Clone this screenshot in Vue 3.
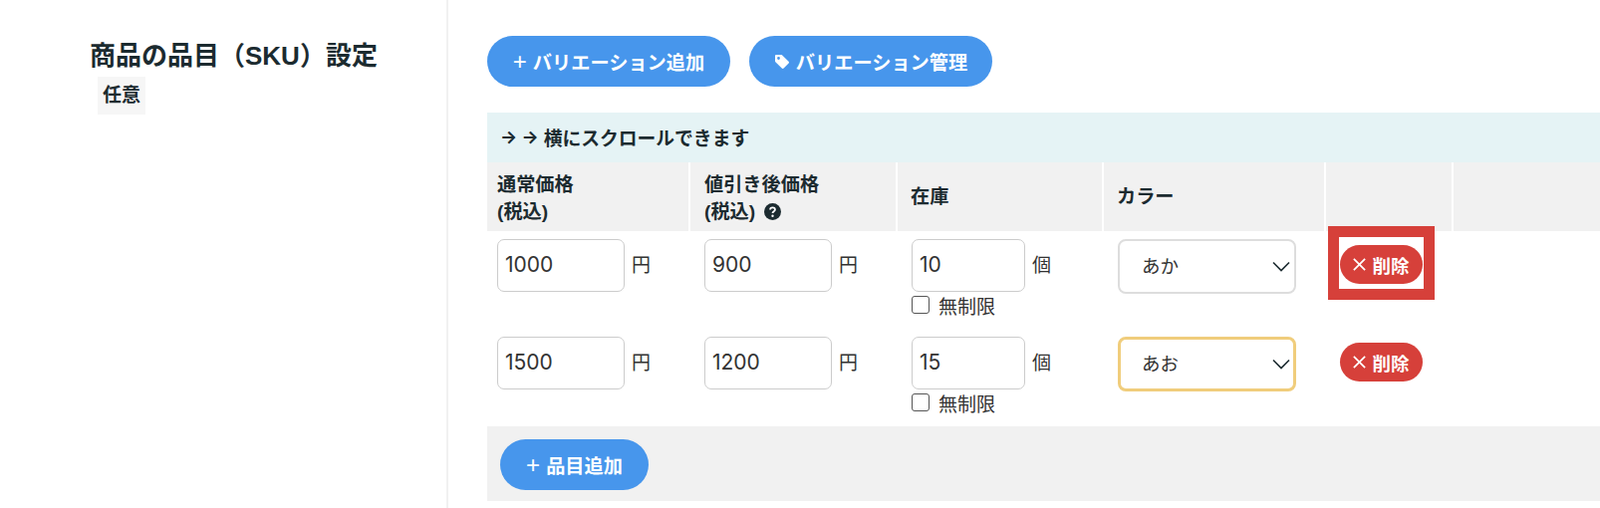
<template>
  <div class="page">
    <aside class="side">
      <h2>商品の品目（SKU）設定</h2>
      <span class="badge">任意</span>
    </aside>

    <main class="content">
      <div class="actions">
        <button class="btn wide" type="button"><span class="plus">+</span> バリエーション追加</button>
        <button class="btn wide" type="button">
          <svg class="tag" viewBox="0 0 16 16" width="16" height="16">
            <path fill="#fff" fill-rule="evenodd" d="M1 2.2C1 1.5 1.5 1 2.2 1h5c.4 0 .7.1 1 .4l6.4 6.4c.5.5.5 1.3 0 1.8l-5 5c-.5.5-1.3.5-1.8 0L1.4 8.200c-.3-.3-.4-.6-.4-1zM4.500 3.100a1.400 1.400 0 1 0 0 2.800 1.400 1.400 0 0 0 0-2.800z"/>
          </svg>
          バリエーション管理
        </button>
      </div>

      <div class="notice"><span class="arrows">→ →</span> 横にスクロールできます</div>

      <div class="grid head">
        <div class="th">通常価格<br />(税込)</div>
        <div class="th">
          値引き後価格<br />(税込)
          <svg class="help" viewBox="0 0 16 16" width="17" height="17">
            <circle cx="8" cy="8" r="8" fill="#1c2b30" />
            <path d="M5.700 6.200c0-1.300 1-2.100 2.300-2.100s2.300.8 2.300 2c0 1.700-2.300 1.700-2.300 3.300" fill="none" stroke="#fff" stroke-width="1.700" />
            <circle cx="8" cy="12" r="1.100" fill="#fff" />
          </svg>
        </div>
        <div class="th">在庫</div>
        <div class="th">カラー</div>
        <div class="th"></div>
        <div class="th"></div>
      </div>

      <div v-for="(item, i) in items" :key="i" class="grid row">
        <div class="td">
          <input v-model="item.price" class="field price" type="text" />
          <span class="unit">円</span>
        </div>
        <div class="td">
          <input v-model="item.discount" class="field price" type="text" />
          <span class="unit">円</span>
        </div>
        <div class="td stock">
          <div>
            <input v-model="item.stock" class="field qty" type="text" />
            <span class="unit">個</span>
          </div>
          <label class="check"><input type="checkbox" /><span>無制限</span></label>
        </div>
        <div class="td">
          <div class="select-wrap">
            <select v-model="item.color" class="select" :class="{ active: i === 1 }">
              <option>あか</option>
              <option>あお</option>
            </select>
            <svg class="chevron" viewBox="0 0 18 11" width="18" height="11">
              <path d="M1 1.500l8 8 8-8" fill="none" stroke="#1c2b30" stroke-width="1.600" />
            </svg>
          </div>
        </div>
        <div class="td del-cell">
          <button class="del" :class="{ marked: i === 0 }" type="button">
            <svg viewBox="0 0 12 12" width="13" height="13">
              <path d="M.8.8l10.400 10.400M11.200.8L.8 11.200" stroke="#fff" stroke-width="1.600" fill="none" />
            </svg>
            削除
          </button>
        </div>
        <div class="td"></div>
      </div>

      <div class="footer">
        <button class="btn" type="button"><span class="plus">+</span> 品目追加</button>
      </div>
    </main>
  </div>
</template>

<script setup>
import { ref } from 'vue'

const items = ref([
  { price: '1000', discount: '900', stock: '10', color: 'あか' },
  { price: '1500', discount: '1200', stock: '15', color: 'あお' }
])
</script>

<style>
html, body {
  margin: 0;
  overflow: hidden;
  background: #fff;
}
</style>

<style scoped>
.page {
  display: flex;
  width: 1606px;
  height: 510px;
  overflow: hidden;
  color: #1c2b30;
  font-family: "Liberation Sans", "Noto Sans CJK JP", sans-serif;
}

.side {
  flex: none;
  width: 450px;
  box-sizing: border-box;
  padding: 39px 0 0 90px;
  border-right: 2px solid #f1f1f1;
}

h2 {
  margin: 0;
  font-size: 26px;
  line-height: 34px;
  font-weight: 700;
}

.badge {
  display: inline-block;
  margin: 4px 0 0 8px;
  padding: 0 5px;
  height: 38px;
  line-height: 38px;
  background: #f6f6f6;
  font-size: 19px;
  font-weight: 700;
}

.content {
  flex: 1;
  min-width: 0;
  padding: 36px 0 0 39px;
}

.actions {
  display: flex;
  gap: 19px;
  margin-bottom: 26px;
}

.btn {
  display: inline-flex;
  align-items: center;
  justify-content: center;
  gap: 6px;
  height: 51px;
  padding: 0;
  border: none;
  border-radius: 26px;
  background: #4796ec;
  color: #fff;
  font-family: inherit;
  font-size: 19.200px;
  font-weight: 700;
  white-space: nowrap;
}

.wide {
  width: 244px;
}

.plus {
  font-weight: 400;
  font-size: 24px;
  line-height: 1;
}

.notice {
  display: flex;
  align-items: center;
  gap: 5px;
  height: 50px;
  box-sizing: border-box;
  padding: 0 0 1px 13px;
  background: #e5f3f5;
  font-size: 18.800px;
  font-weight: 700;
}

.arrows {
  font-family: Inter, sans-serif;
  font-size: 18px;
}

.grid {
  display: grid;
  grid-template-columns: 202px 208px 207px 223px 128px 1fr;
}

.head .th {
  display: flex;
  flex-wrap: wrap;
  align-content: center;
  align-items: center;
  gap: 0 6px;
  height: 69px;
  padding-left: 13px;
  background: #f1f1f1;
  border-left: 2px solid #fff;
  box-sizing: border-box;
  font-size: 19.200px;
  line-height: 27px;
  font-weight: 700;
}

.head .th:first-child {
  display: block;
  padding: 3px 0 0 10px;
  border-left: none;
}

.head .th:nth-child(2) {
  display: block;
  padding: 3px 0 0 14px;
}

.help {
  vertical-align: -2px;
  margin-left: 3px;
}

.row {
  height: 98px;
}

.td {
  padding: 8px 0 0 16px;
  font-size: 19px;
}

.row .td:first-child {
  padding-left: 10px;
}

.field {
  box-sizing: border-box;
  height: 53px;
  padding: 0 7px 2px;
  border: 1px solid #ccc;
  border-radius: 7px;
  background: #fff;
  color: #333;
  font-family: Inter, sans-serif;
  font-size: 21px;
  outline: none;
}

.price {
  width: 128px;
}

.qty {
  width: 114px;
}

.unit {
  margin-left: 7px;
  color: #333;
}

.check {
  display: flex;
  align-items: center;
  gap: 9px;
  height: 26px;
  color: #333;
}

.check input {
  appearance: none;
  box-sizing: border-box;
  width: 18px;
  height: 18px;
  margin: 0;
  border: 1px solid #555;
  border-radius: 3px;
  background: #fff;
}

.select-wrap {
  position: relative;
  width: 179px;
}

.select {
  appearance: none;
  display: block;
  box-sizing: border-box;
  width: 100%;
  height: 55px;
  padding-left: 22px;
  border: 2px solid #ddd;
  border-radius: 8px;
  background: #fff;
  color: #333;
  font-family: inherit;
  font-size: 18.500px;
  outline: none;
}

.select.active {
  padding-left: 21px;
  border: 3px solid #f0cd7c;
}

.chevron {
  position: absolute;
  right: 6px;
  top: 22px;
  pointer-events: none;
}

.del-cell {
  padding-top: 14px;
  padding-left: 16px;
}

.del {
  position: relative;
  display: inline-flex;
  align-items: center;
  justify-content: center;
  gap: 6px;
  width: 83px;
  height: 39px;
  padding: 0;
  border: none;
  border-radius: 20px;
  background: #d6403a;
  color: #fff;
  font-family: inherit;
  font-size: 18.500px;
  font-weight: 700;
}

/* 赤枠の注釈 */
.del.marked::after {
  content: "";
  position: absolute;
  left: -12px;
  right: -12px;
  top: -19px;
  bottom: -16px;
  border: 11px solid #d6403a;
}

.footer {
  height: 75px;
  padding: 13px 0 0 13px;
  box-sizing: border-box;
  background: #f1f1f1;
}

.footer .btn {
  width: 149px;
}
</style>
